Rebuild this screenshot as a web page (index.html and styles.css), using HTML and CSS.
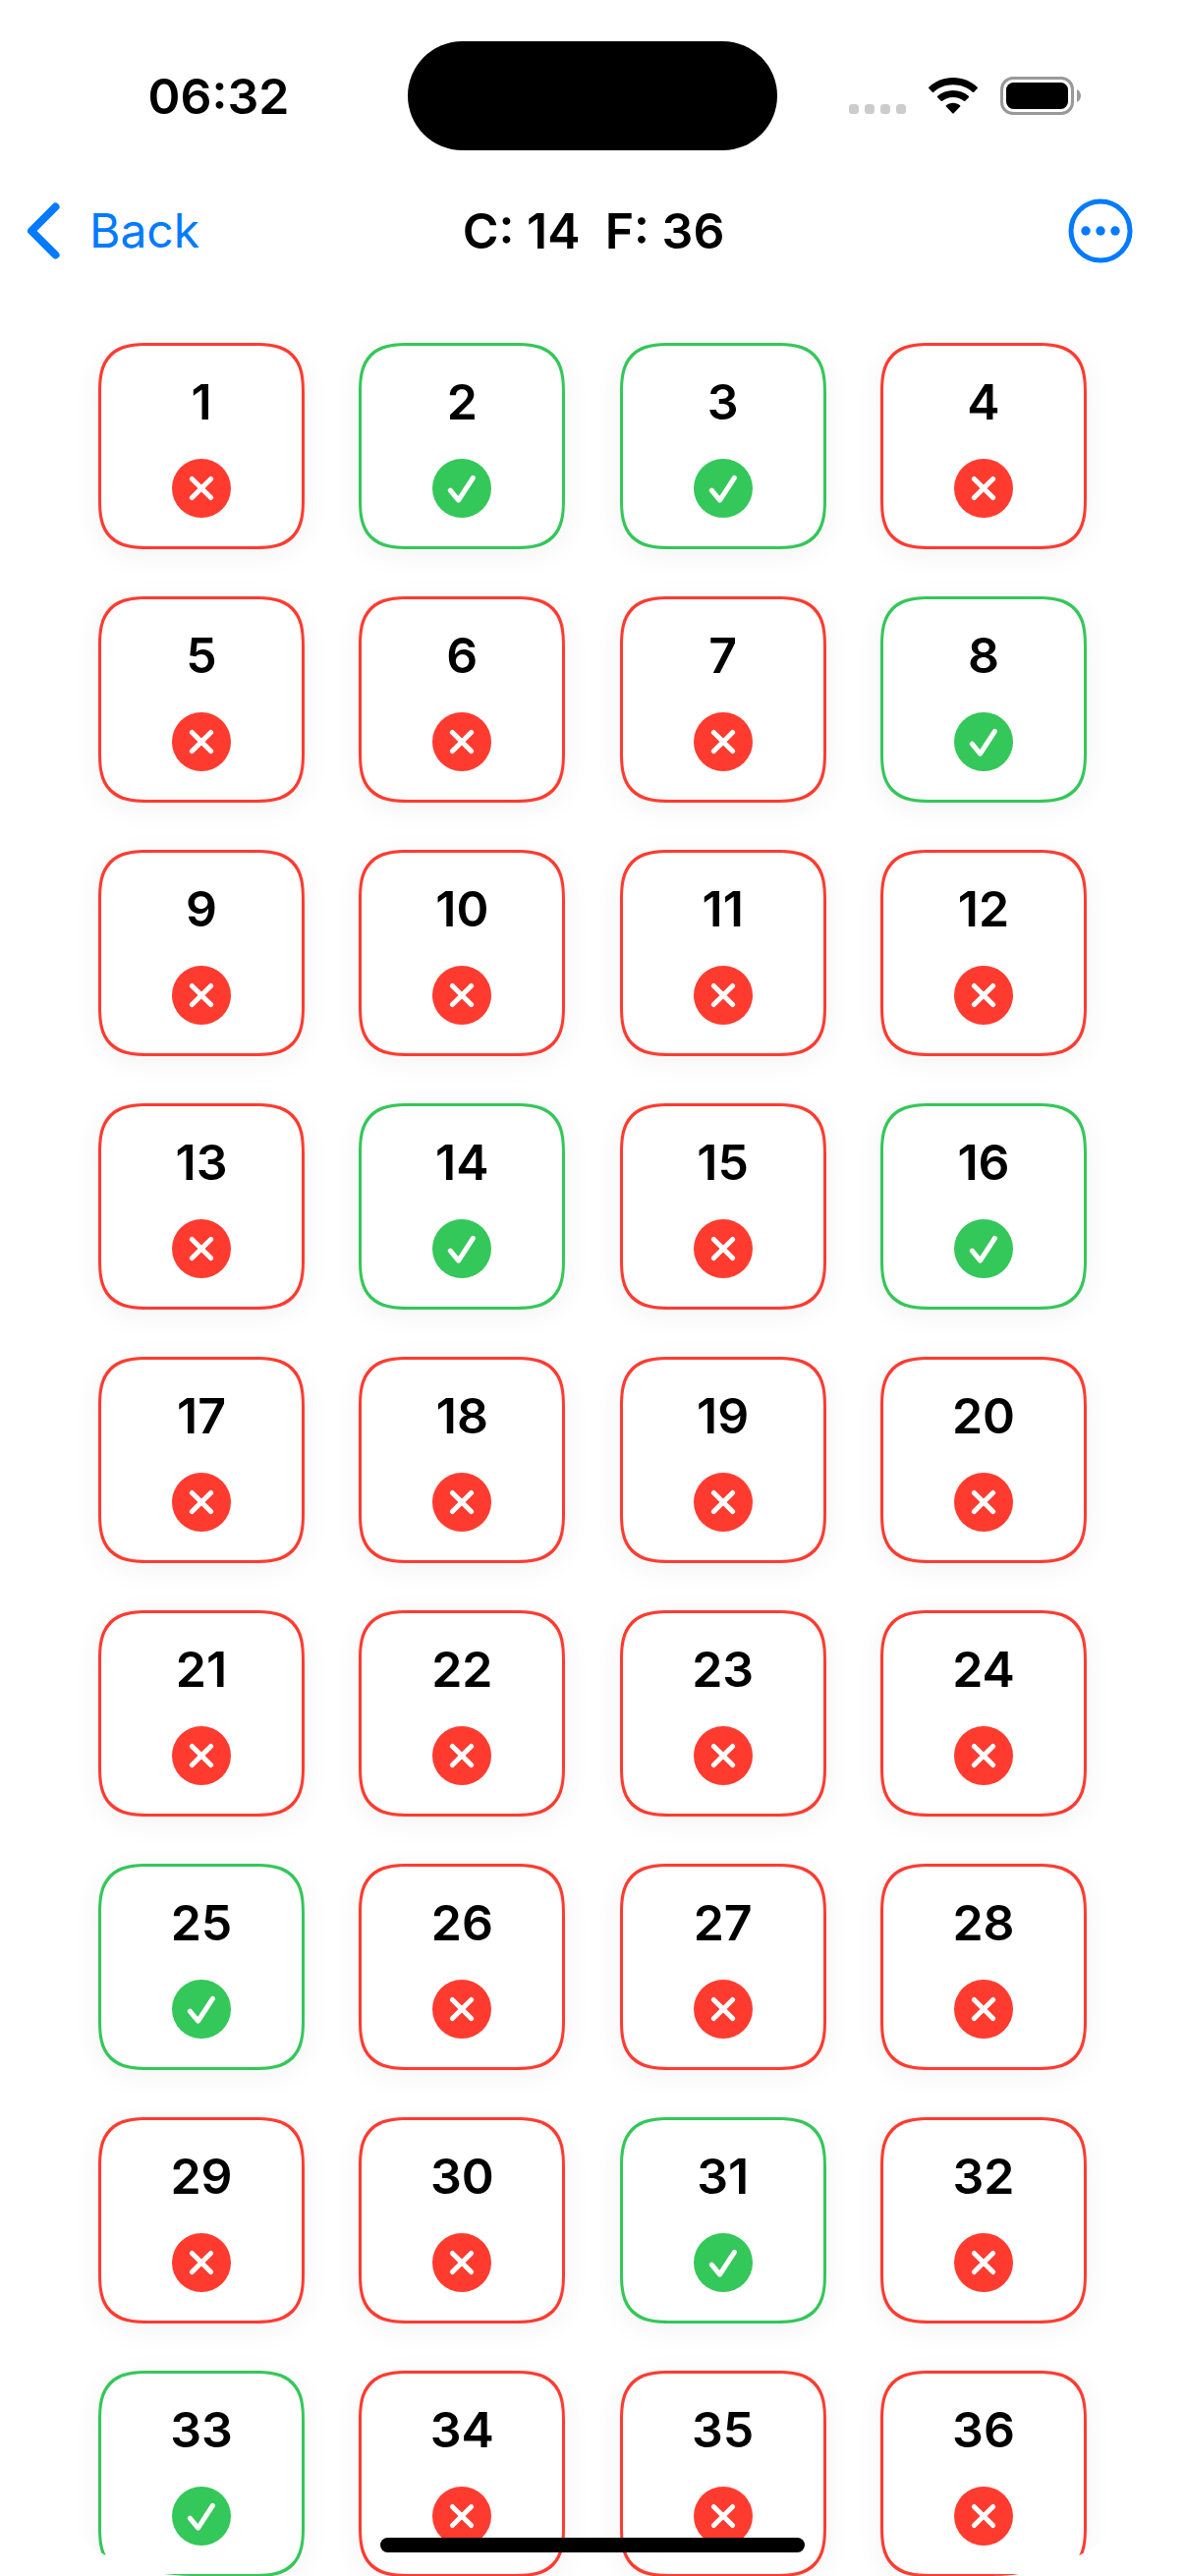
FILE: index.html
```html
<!DOCTYPE html>
<html lang="en">
<head>
<meta charset="utf-8">
<meta name="viewport" content="width=device-width, initial-scale=1">
<title>C: 14 F: 36</title>
<link rel="stylesheet" href="styles.css">
</head>
<body>
<svg class="symbols" aria-hidden="true">
  <symbol id="wrong" viewBox="0 0 60 60">
    <circle cx="30" cy="30" r="30" fill="currentColor"/>
    <path d="M20.4 20.4 39.6 39.6M39.6 20.4 20.4 39.6" fill="none" stroke="#fff" stroke-width="5" stroke-linecap="round"/>
  </symbol>
  <symbol id="right" viewBox="0 0 60 60">
    <circle cx="30" cy="30" r="30" fill="currentColor"/>
    <path d="M18.3 32.2 26.6 42.2 41.4 19.4" fill="none" stroke="#fff" stroke-width="5" stroke-linecap="round" stroke-linejoin="round"/>
  </symbol>
</svg>
<div class="screen">
  <div class="status">
    <span class="time">06:32</span>
    <span class="island"></span>
    <span class="indicators">
      <svg width="58" height="40" viewBox="0 0 58 40" fill="#ccc" aria-hidden="true">
        <rect x="0" y="28" width="10" height="10" rx="3.5"/><rect x="16" y="28" width="10" height="10" rx="3.5"/><rect x="32" y="28" width="10" height="10" rx="3.5"/><rect x="48" y="28" width="10" height="10" rx="3.5"/>
      </svg>
      <svg width="52" height="40" viewBox="0 0 52 40" aria-hidden="true">
        <path d="M26 1C35.600 1 44.300 4.700 50.700 10.700Q51.300 11.400 50.700 12.100L47.200 15.700Q46.500 16.300 45.800 15.700C40.600 10.900 33.600 8.200 26 8.200S11.400 10.900 6.200 15.700Q5.500 16.300 4.800 15.700L1.300 12.100Q.700 11.400 1.300 10.700C7.700 4.700 16.400 1 26 1Z"/>
        <path d="M26 14C32 14 37.600 16.200 41.800 19.800Q42.500 20.500 41.800 21.200L38.300 24.800Q37.600 25.400 36.900 24.800C34 22.500 30.200 21.100 26 21.100S18 22.500 15.100 24.800Q14.400 25.400 13.700 24.800L10.200 21.200Q9.500 20.500 10.200 19.800C14.400 16.200 20 14 26 14Z"/>
        <path d="M26 26.800C28.700 26.800 31.200 27.700 33.100 29.200Q33.800 29.900 33.100 30.600L26.700 37.300Q26 38 25.300 37.300L18.900 30.600Q18.200 29.900 18.900 29.200C20.800 27.700 23.300 26.800 26 26.800Z"/>
      </svg>
      <svg width="82" height="40" viewBox="0 0 82 40" aria-hidden="true">
        <rect x="1.500" y="1.500" width="72" height="36" rx="11.500" fill="none" stroke="#999" stroke-width="3"/>
        <rect x="6" y="6" width="63" height="27" rx="7.500"/>
        <path d="M78 13C83.300 15.500 83.300 23.500 78 26Z" fill="#999"/>
      </svg>
    </span>
  </div>
  <header class="nav">
    <a class="back" href="#back">
      <svg width="34" height="58" viewBox="0 0 34 58" fill="none" stroke="currentColor" stroke-width="8" stroke-linecap="round" stroke-linejoin="round" aria-hidden="true"><path d="M29.500 4.500 5 29 29.500 53.500"/></svg>
      <span>Back</span>
    </a>
    <h1 class="title">C: 14&nbsp; F: 36</h1>
    <button class="more" type="button" aria-label="More">
      <svg width="66" height="66" viewBox="0 0 66 66" aria-hidden="true"><circle cx="33" cy="33" r="30" fill="none" stroke="currentColor" stroke-width="5"/><g fill="currentColor"><circle cx="18" cy="33" r="4.700"/><circle cx="33" cy="33" r="4.700"/><circle cx="48" cy="33" r="4.700"/></g></svg>
    </button>
  </header>
  <main class="grid">
    <button class="card wrong" type="button">1<svg class="mark"><use href="#wrong"/></svg></button>
    <button class="card right" type="button">2<svg class="mark"><use href="#right"/></svg></button>
    <button class="card right" type="button">3<svg class="mark"><use href="#right"/></svg></button>
    <button class="card wrong" type="button">4<svg class="mark"><use href="#wrong"/></svg></button>
    <button class="card wrong" type="button">5<svg class="mark"><use href="#wrong"/></svg></button>
    <button class="card wrong" type="button">6<svg class="mark"><use href="#wrong"/></svg></button>
    <button class="card wrong" type="button">7<svg class="mark"><use href="#wrong"/></svg></button>
    <button class="card right" type="button">8<svg class="mark"><use href="#right"/></svg></button>
    <button class="card wrong" type="button">9<svg class="mark"><use href="#wrong"/></svg></button>
    <button class="card wrong" type="button">10<svg class="mark"><use href="#wrong"/></svg></button>
    <button class="card wrong" type="button">11<svg class="mark"><use href="#wrong"/></svg></button>
    <button class="card wrong" type="button">12<svg class="mark"><use href="#wrong"/></svg></button>
    <button class="card wrong" type="button">13<svg class="mark"><use href="#wrong"/></svg></button>
    <button class="card right" type="button">14<svg class="mark"><use href="#right"/></svg></button>
    <button class="card wrong" type="button">15<svg class="mark"><use href="#wrong"/></svg></button>
    <button class="card right" type="button">16<svg class="mark"><use href="#right"/></svg></button>
    <button class="card wrong" type="button">17<svg class="mark"><use href="#wrong"/></svg></button>
    <button class="card wrong" type="button">18<svg class="mark"><use href="#wrong"/></svg></button>
    <button class="card wrong" type="button">19<svg class="mark"><use href="#wrong"/></svg></button>
    <button class="card wrong" type="button">20<svg class="mark"><use href="#wrong"/></svg></button>
    <button class="card wrong" type="button">21<svg class="mark"><use href="#wrong"/></svg></button>
    <button class="card wrong" type="button">22<svg class="mark"><use href="#wrong"/></svg></button>
    <button class="card wrong" type="button">23<svg class="mark"><use href="#wrong"/></svg></button>
    <button class="card wrong" type="button">24<svg class="mark"><use href="#wrong"/></svg></button>
    <button class="card right" type="button">25<svg class="mark"><use href="#right"/></svg></button>
    <button class="card wrong" type="button">26<svg class="mark"><use href="#wrong"/></svg></button>
    <button class="card wrong" type="button">27<svg class="mark"><use href="#wrong"/></svg></button>
    <button class="card wrong" type="button">28<svg class="mark"><use href="#wrong"/></svg></button>
    <button class="card wrong" type="button">29<svg class="mark"><use href="#wrong"/></svg></button>
    <button class="card wrong" type="button">30<svg class="mark"><use href="#wrong"/></svg></button>
    <button class="card right" type="button">31<svg class="mark"><use href="#right"/></svg></button>
    <button class="card wrong" type="button">32<svg class="mark"><use href="#wrong"/></svg></button>
    <button class="card right" type="button">33<svg class="mark"><use href="#right"/></svg></button>
    <button class="card wrong" type="button">34<svg class="mark"><use href="#wrong"/></svg></button>
    <button class="card wrong" type="button">35<svg class="mark"><use href="#wrong"/></svg></button>
    <button class="card wrong" type="button">36<svg class="mark"><use href="#wrong"/></svg></button>
  </main>
  <div class="home-bar"></div>
</div>
</body>
</html>
```
FILE: styles.css
```css
:root {
  --red: #ff3b30;
  --green: #34c759;
  --blue: #007aff;
}

* {
  box-sizing: border-box;
}

body {
  margin: 0;
  background: #fff;
  color: #000;
  font-family: Inter, "Liberation Sans", sans-serif;
  font-size: 50px;
  line-height: 60px;
}

svg {
  display: block;
  flex: none;
}

.symbols {
  position: absolute;
  width: 0;
  height: 0;
}

/* The display has rounded lower corners that cut off the scrolled cards. */
.screen {
  position: relative;
  display: flex;
  flex-direction: column;
  height: 100vh;
  overflow: hidden;
  border-radius: 0 0 196px 196px;
}

.status {
  display: grid;
  grid-template-columns: 1fr 376px 1fr;
  align-items: center;
  flex: none;
  height: 168px;
  padding-top: 27px;
}

.time {
  padding-left: 30px;
  text-align: center;
  font-weight: 600;
}

.island {
  height: 111px;
  border-radius: 56px;
  background: #000;
}

.indicators {
  display: flex;
  justify-content: center;
  gap: 22px;
  padding-right: 33px;
}

.nav {
  display: grid;
  grid-template-columns: 1fr auto 1fr;
  align-items: center;
  flex: none;
  height: 133px;
  padding: 0 53px 0 27px;
}

.back {
  display: flex;
  align-items: center;
  gap: 30px;
  color: var(--blue);
  font-size: 48px;
  text-decoration: none;
}

.title {
  margin: 0 0 0 28px;
  font-size: inherit;
  font-weight: 600;
}

.more {
  justify-self: end;
  padding: 0;
  border: 0;
  background: none;
  color: var(--blue);
}

.grid {
  display: grid;
  grid-template-columns: repeat(4, 210px);
  grid-auto-rows: 210px;
  justify-content: space-between;
  row-gap: 48px;
  flex: 1;
  min-height: 0;
  padding: 48px 100px 0;
}

.card {
  display: flex;
  flex-direction: column;
  align-items: center;
  gap: 28px;
  padding: 27px 0 0;
  border: 3px solid;
  border-radius: 40px;
  background: #fff;
  box-shadow: 0 6px 30px rgba(0, 0, 0, 0.05);
  color: #000;
  font: inherit;
  font-weight: 600;
}

@supports (corner-shape: squircle) {
  .card {
    border-radius: 52px;
    corner-shape: superellipse(1.5);
  }
}

.mark {
  width: 60px;
  height: 60px;
}

.wrong {
  border-color: var(--red);
}

.wrong .mark {
  color: var(--red);
}

.right {
  border-color: var(--green);
}

.right .mark {
  color: var(--green);
}

.home-bar {
  position: absolute;
  bottom: 24px;
  left: 50%;
  width: 432px;
  height: 15px;
  margin-left: -216px;
  border-radius: 8px;
  background: #000;
}
```
